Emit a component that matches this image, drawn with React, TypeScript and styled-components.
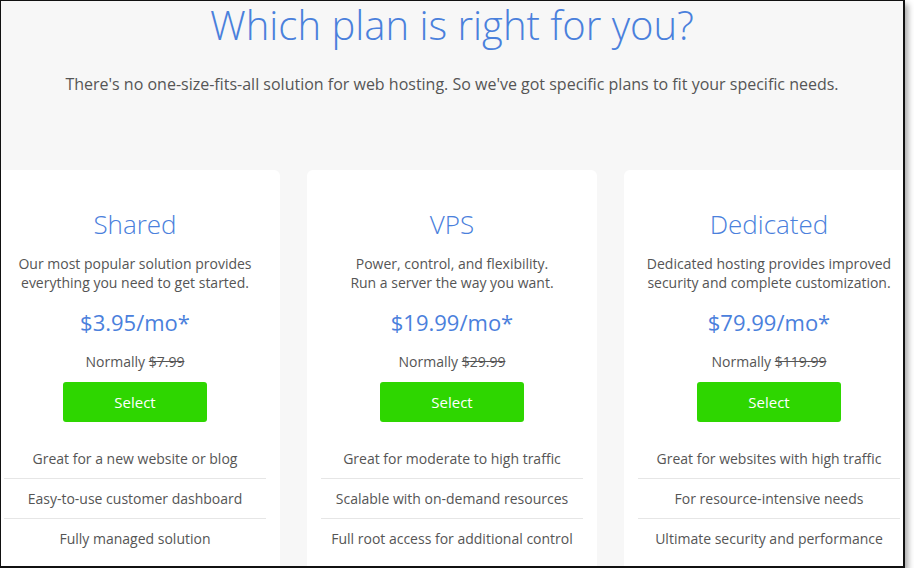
import React from 'react';
import styled, { createGlobalStyle } from 'styled-components';

const GlobalStyle = createGlobalStyle`
    html, body {
        margin: 0;
        padding: 0;
        background: #ffffff;
    }
    body {
        font-family: "Open Sans", "Noto Sans", sans-serif;
    }
`;

const Frame = styled.div`
    box-sizing: border-box;
    width: 905px;
    height: 568px;
    border: 1px solid #111;
    border-right-width: 2px;
    border-bottom-width: 2px;
    box-shadow: 3px 4px 6px rgba(0, 0, 0, 0.35);
    background: #f7f7f7;
    overflow: hidden;
`;

const Header = styled.header`
    text-align: center;
`;

const Title = styled.h1`
    margin: 0;
    font-size: 40px;
    line-height: 48px;
    font-weight: 300;
    color: #4a80dc;
`;

const Lead = styled.p`
    margin: 24px 0 0;
    font-size: 16px;
    line-height: 22px;
    color: #555;
`;

const PlanRow = styled.div`
    display: flex;
    justify-content: center;
    gap: 27px;
    margin-top: 75px;
`;

const Card = styled.section`
    flex: 0 0 290px;
    height: 420px;
    background: #fff;
    border-radius: 6px;
    padding-top: 38px;
    text-align: center;
    color: #555;
`;

const PlanName = styled.h2`
    margin: 0;
    font-size: 26px;
    line-height: 33px;
    font-weight: 300;
    color: #4a80dc;
`;

const Blurb = styled.p`
    margin: 13px 0 0;
    font-size: 14px;
    line-height: 19px;
`;

const Price = styled.div`
    margin-top: 16px;
    font-size: 22px;
    line-height: 28px;
    color: #4a80dc;
`;

const Normally = styled.div`
    margin-top: 16px;
    font-size: 14px;
    line-height: 19px;

    s {
        text-decoration: line-through;
    }
`;

const SelectButton = styled.button`
    display: block;
    width: 144px;
    height: 40px;
    margin: 11px auto 0;
    border: none;
    border-radius: 3px;
    background: #2ed600;
    color: #fff;
    font-family: inherit;
    font-size: 15px;
    cursor: pointer;
`;

const Features = styled.ul`
    list-style: none;
    margin: 17px 14px 0;
    padding: 0;
`;

const Feature = styled.li`
    padding: 10px 0;
    font-size: 14px;
    line-height: 19px;
    border-bottom: 1px solid #e6e6e6;

    &:last-child {
        border-bottom: none;
    }
`;

type Plan = {
    name: string;
    blurb: [string, string];
    price: string;
    normal: string;
    features: string[];
};

const plans: Plan[] = [
    {
        name: 'Shared',
        blurb: ['Our most popular solution provides', 'everything you need to get started.'],
        price: '$3.95/mo*',
        normal: '$7.99',
        features: ['Great for a new website or blog', 'Easy-to-use customer dashboard', 'Fully managed solution']
    },
    {
        name: 'VPS',
        blurb: ['Power, control, and flexibility.', 'Run a server the way you want.'],
        price: '$19.99/mo*',
        normal: '$29.99',
        features: ['Great for moderate to high traffic', 'Scalable with on-demand resources', 'Full root access for additional control']
    },
    {
        name: 'Dedicated',
        blurb: ['Dedicated hosting provides improved', 'security and complete customization.'],
        price: '$79.99/mo*',
        normal: '$119.99',
        features: ['Great for websites with high traffic', 'For resource-intensive needs', 'Ultimate security and performance']
    }
];

export default function App() {
    return (
        <>
            <GlobalStyle />
            <Frame>
                <Header>
                    <Title>Which plan is right for you?</Title>
                    <Lead>
                        There's no one-size-fits-all solution for web hosting. So we've got specific plans to fit your specific needs.
                    </Lead>
                </Header>
                <PlanRow>
                    {plans.map((plan) => (
                        <Card key={plan.name}>
                            <PlanName>{plan.name}</PlanName>
                            <Blurb>
                                {plan.blurb[0]}
                                <br />
                                {plan.blurb[1]}
                            </Blurb>
                            <Price>{plan.price}</Price>
                            <Normally>
                                Normally <s>{plan.normal}</s>
                            </Normally>
                            <SelectButton>Select</SelectButton>
                            <Features>
                                {plan.features.map((f) => (
                                    <Feature key={f}>{f}</Feature>
                                ))}
                            </Features>
                        </Card>
                    ))}
                </PlanRow>
            </Frame>
        </>
    );
}
